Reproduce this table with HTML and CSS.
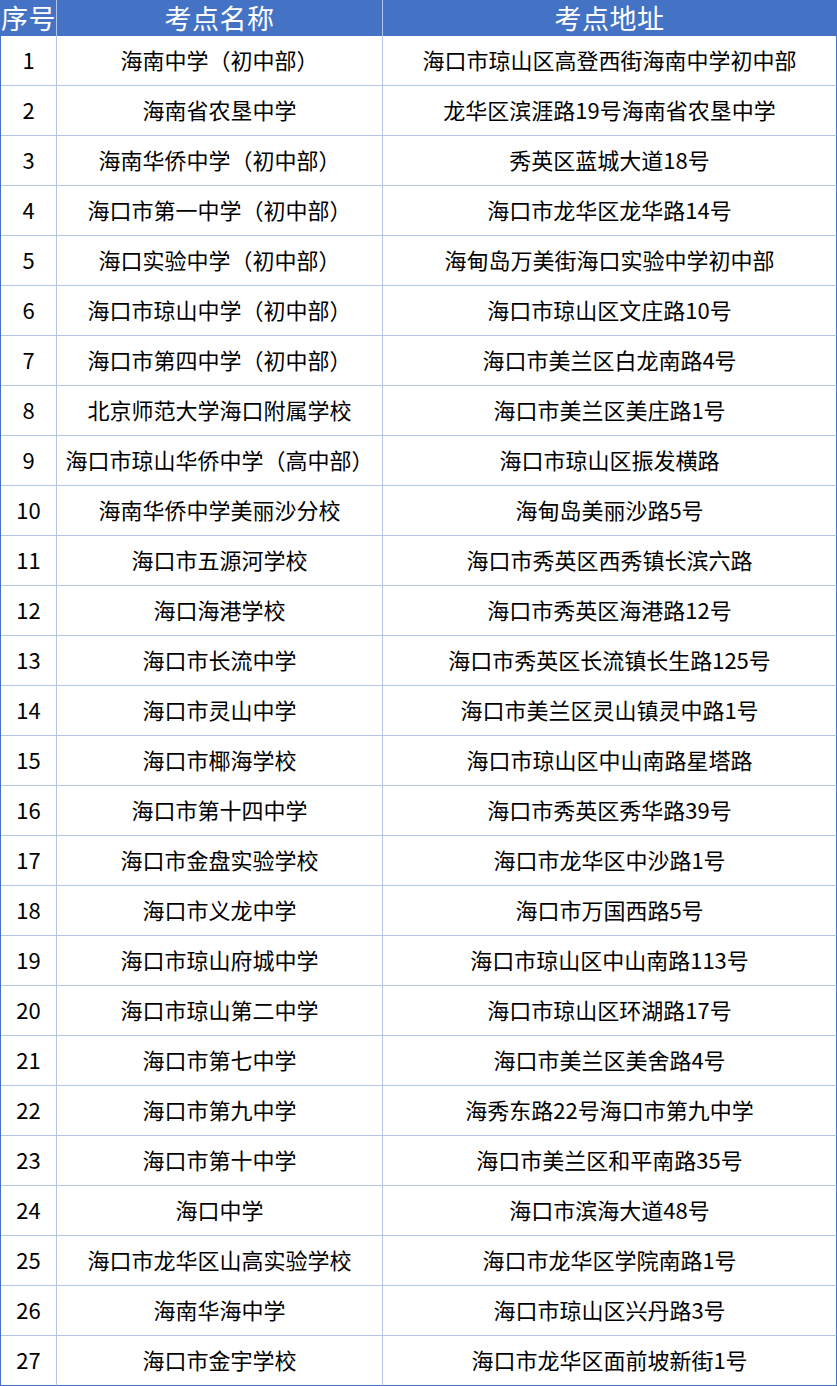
FILE: index.html
```html
<!DOCTYPE html>
<html lang="zh-CN">
<head>
<meta charset="utf-8">
<title>考点</title>
<link rel="stylesheet" href="styles.css">
</head>
<body>
<table class="sheet">
<colgroup><col class="c-no"><col class="c-name"><col class="c-addr"></colgroup>
<thead>
<tr><th>序号</th><th>考点名称</th><th>考点地址</th></tr>
</thead>
<tbody>
<tr><td>1</td><td>海南中学（初中部）</td><td>海口市琼山区高登西街海南中学初中部</td></tr>
<tr><td>2</td><td>海南省农垦中学</td><td>龙华区滨涯路19号海南省农垦中学</td></tr>
<tr><td>3</td><td>海南华侨中学（初中部）</td><td>秀英区蓝城大道18号</td></tr>
<tr><td>4</td><td>海口市第一中学（初中部）</td><td>海口市龙华区龙华路14号</td></tr>
<tr><td>5</td><td>海口实验中学（初中部）</td><td>海甸岛万美街海口实验中学初中部</td></tr>
<tr><td>6</td><td>海口市琼山中学（初中部）</td><td>海口市琼山区文庄路10号</td></tr>
<tr><td>7</td><td>海口市第四中学（初中部）</td><td>海口市美兰区白龙南路4号</td></tr>
<tr><td>8</td><td>北京师范大学海口附属学校</td><td>海口市美兰区美庄路1号</td></tr>
<tr><td>9</td><td>海口市琼山华侨中学（高中部）</td><td>海口市琼山区振发横路</td></tr>
<tr><td>10</td><td>海南华侨中学美丽沙分校</td><td>海甸岛美丽沙路5号</td></tr>
<tr><td>11</td><td>海口市五源河学校</td><td>海口市秀英区西秀镇长滨六路</td></tr>
<tr><td>12</td><td>海口海港学校</td><td>海口市秀英区海港路12号</td></tr>
<tr><td>13</td><td>海口市长流中学</td><td>海口市秀英区长流镇长生路125号</td></tr>
<tr><td>14</td><td>海口市灵山中学</td><td>海口市美兰区灵山镇灵中路1号</td></tr>
<tr><td>15</td><td>海口市椰海学校</td><td>海口市琼山区中山南路星塔路</td></tr>
<tr><td>16</td><td>海口市第十四中学</td><td>海口市秀英区秀华路39号</td></tr>
<tr><td>17</td><td>海口市金盘实验学校</td><td>海口市龙华区中沙路1号</td></tr>
<tr><td>18</td><td>海口市义龙中学</td><td>海口市万国西路5号</td></tr>
<tr><td>19</td><td>海口市琼山府城中学</td><td>海口市琼山区中山南路113号</td></tr>
<tr><td>20</td><td>海口市琼山第二中学</td><td>海口市琼山区环湖路17号</td></tr>
<tr><td>21</td><td>海口市第七中学</td><td>海口市美兰区美舍路4号</td></tr>
<tr><td>22</td><td>海口市第九中学</td><td>海秀东路22号海口市第九中学</td></tr>
<tr><td>23</td><td>海口市第十中学</td><td>海口市美兰区和平南路35号</td></tr>
<tr><td>24</td><td>海口中学</td><td>海口市滨海大道48号</td></tr>
<tr><td>25</td><td>海口市龙华区山高实验学校</td><td>海口市龙华区学院南路1号</td></tr>
<tr><td>26</td><td>海南华海中学</td><td>海口市琼山区兴丹路3号</td></tr>
<tr><td>27</td><td>海口市金宇学校</td><td>海口市龙华区面前坡新街1号</td></tr>
</tbody>
</table>
</body>
</html>
```
FILE: styles.css
```css
html, body {
  margin: 0;
  padding: 0;
  background: #ffffff;
}
.sheet {
  width: 837px;
  table-layout: fixed;
  border-collapse: separate;
  border-spacing: 0;
  border-left: 1px solid #4472c4;
  font-family: "Noto Sans CJK SC", "Noto Sans", sans-serif;
}
.c-no { width: 56px; }
.c-name { width: 326px; }
.c-addr { width: 454px; }
.sheet th, .sheet td {
  padding: 0;
  text-align: center;
  white-space: nowrap;
  border-right: 1px solid #b4c6e7;
}
.sheet th {
  height: 36px;
  background: #4472c4;
  color: #ffffff;
  font-size: 27px;
  font-weight: 400;
  line-height: 36px;
  letter-spacing: 0.5px;
}
.sheet td {
  height: 46px;
  padding-bottom: 3px;
  border-bottom: 1px solid #b4c6e7;
  color: #000000;
  font-size: 22px;
  line-height: 44px;
  overflow: hidden;
}
.sheet th:last-child, .sheet td:last-child {
  border-right-color: #4472c4;
}
.sheet tbody tr:last-child td {
  border-bottom-color: #4472c4;
}
```
